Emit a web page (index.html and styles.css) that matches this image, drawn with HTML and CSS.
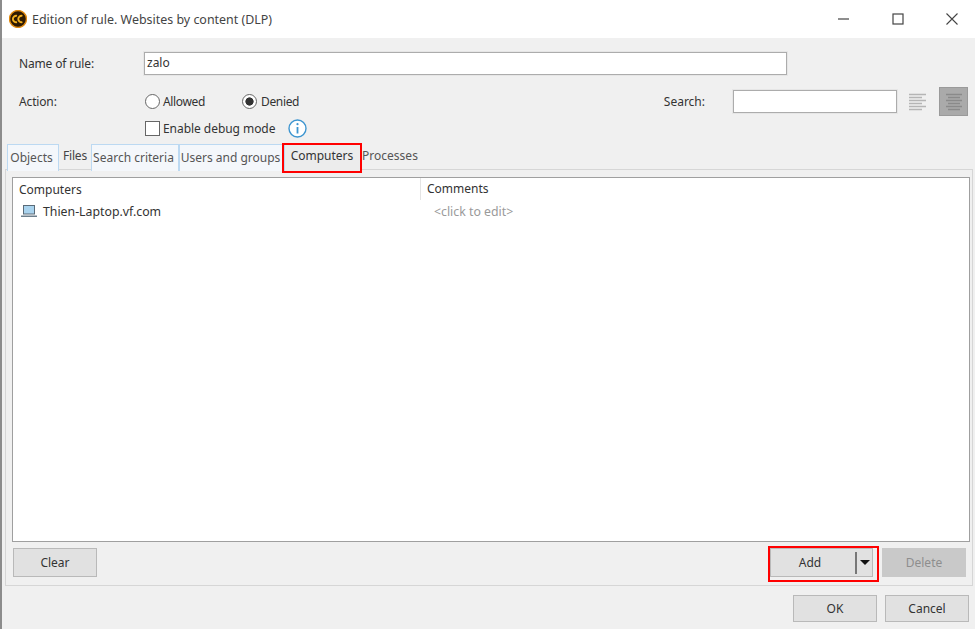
FILE: index.html
```html
<!DOCTYPE html>
<html lang="en">
<head>
<meta charset="utf-8">
<title>Edition of rule</title>
<link rel="stylesheet" href="styles.css">
</head>
<body>
<div class="window">
  <header class="titlebar">
    <svg class="app-icon" width="18" height="18" viewBox="0 0 18 18"><circle cx="9" cy="9" r="8.5" fill="#2e1a02"/><circle cx="9" cy="9" r="8.5" fill="none" stroke="#e08a10" stroke-width="1.4"/><path d="M8 5.800a3.300 3.300 0 1 0 0 6.400M13.400 5.800a3.300 3.300 0 1 0 0 6.400" fill="none" stroke="#f2b01e" stroke-width="1.900"/></svg>
    <span class="title">Edition of rule. Websites by content (DLP)</span>
    <div class="win-controls">
      <svg width="12" height="12" viewBox="0 0 12 12"><path d="M0 6h11" stroke="#444" stroke-width="1.2"/></svg>
      <svg width="12" height="12" viewBox="0 0 12 12"><rect x="1" y="1" width="10" height="10" fill="none" stroke="#444" stroke-width="1.2"/></svg>
      <svg width="12" height="12" viewBox="0 0 12 12"><path d="M.5.5l11 11M11.500.5l-11 11" stroke="#444" stroke-width="1.1"/></svg>
    </div>
  </header>
  <main class="body">
    <div class="row name-row">
      <label class="label">Name of rule:</label>
      <div class="input name-input">zalo</div>
    </div>
    <div class="row action-row">
      <span class="label">Action:</span>
      <span class="radio"></span><span class="radio-text allowed">Allowed</span>
      <span class="radio on"></span><span class="radio-text">Denied</span>
      <span class="search-label">Search:</span>
      <div class="input search-input"></div>
      <svg class="align-icon" width="18" height="18" viewBox="0 0 18 18"><path d="M0 1.500h17M0 4.500h13M0 7.500h17M0 10.500h13M0 13.500h17M0 16.500h13" stroke="#b5b5b5" stroke-width="1.6"/></svg>
      <div class="align-btn"><svg width="18" height="18" viewBox="0 0 18 18"><path d="M1 1.500h16M3 4.500h12M1 7.500h16M3 10.500h12M1 13.500h16M3 16.500h12" stroke="#8a8a8a" stroke-width="1.6"/></svg></div>
    </div>
    <div class="row debug-row">
      <span class="checkbox"></span><span class="debug-text">Enable debug mode</span>
      <svg class="info" width="19" height="19" viewBox="0 0 19 19"><circle cx="9.500" cy="9.500" r="8.500" fill="#fff" stroke="#3d95d0" stroke-width="1.400"/><path d="M9.500 8v6.500" stroke="#3d95d0" stroke-width="1.800"/><circle cx="9.500" cy="5.200" r="1.100" fill="#3d95d0"/></svg>
    </div>
    <nav class="tabs">
      <span class="tab framed t-objects">Objects</span>
      <span class="tab t-files">Files</span>
      <span class="tab framed t-search">Search criteria</span>
      <span class="tab framed t-users">Users and groups</span>
      <span class="tab active t-computers">Computers</span>
      <span class="tab t-processes">Processes</span>
    </nav>
    <section class="pane">
      <div class="table">
        <div class="thead"><span class="col-a">Computers</span><span class="col-b">Comments</span></div>
        <div class="trow">
          <span class="col-a cell">
            <svg width="16" height="14" viewBox="0 0 16 14"><rect x="2.500" y="1.500" width="11" height="8.500" fill="#a9d3ee" stroke="#5a6b78"/><path d="M0 11.500h16v1.500H0z" fill="#6d7f8c"/></svg>
            <span class="host">Thien-Laptop.vf.com</span>
          </span>
          <span class="col-b edit">&lt;click to edit&gt;</span>
        </div>
      </div>
      <div class="actions">
        <button class="btn clear">Clear</button>
        <div class="right-actions">
          <div class="btn add"><span class="add-text">Add</span><span class="split"></span><span class="caret"></span></div>
          <button class="btn delete">Delete</button>
        </div>
      </div>
    </section>
    <footer class="footer">
      <button class="btn foot">OK</button>
      <button class="btn foot">Cancel</button>
    </footer>
  </main>
</div>
</body>
</html>
```

FILE: styles.css
```css
* { box-sizing: border-box; }
html, body { margin: 0; padding: 0; }
body {
  width: 975px;
  height: 629px;
  overflow: hidden;
  font-family: "Noto Sans", "Open Sans", sans-serif;
  font-size: 12px;
  color: #333;
  background: #f0f0f0;
}
.window {
  position: relative;
  height: 629px;
  border-left: 2px solid #8c8c8c;
}
.titlebar {
  height: 38px;
  background: #fff;
  display: flex;
  align-items: center;
  padding: 0 17px 0 7px;
}
.app-icon { margin-right: 5px; }
.title { font-size: 12.450px; color: #444; }
.win-controls {
  margin-left: auto;
  display: flex;
  gap: 42px;
  align-items: center;
}
.body { height: 591px; background: #f0f0f0; display: flex; flex-direction: column; }
.row { display: flex; align-items: center; }
.label { width: 125px; color: #333; letter-spacing: -0.150px; }
.name-row { margin-top: 14px; height: 23px; padding-left: 17px; }
.input {
  height: 23px;
  background: #fff;
  border: 1px solid #acacac;
  box-shadow: 0 0 0 1px #e6e6e6;
  padding-left: 2px;
  line-height: 20px;
}
.name-input { width: 643px; }
.action-row { margin-top: 15px; height: 23px; padding-left: 17px; }
.radio {
  width: 15px;
  height: 15px;
  border-radius: 50%;
  border: 1px solid #666;
  background: #fff;
  flex: none;
  margin-left: 1px;
}
.radio.on { background: radial-gradient(circle, #333 0 3.800px, #fff 4.400px); }
.radio-text { margin-left: 3px; letter-spacing: -0.350px; }
.radio.on + .radio-text { margin-left: 4px; }
.allowed { width: 78px; }
.search-label { margin-left: auto; }
.search-input { width: 164px; margin-left: 28px; }
.align-icon { margin-left: 12px; }
.align-btn {
  width: 29px;
  height: 29px;
  background: #aaa;
  border: 1px solid #9a9a9a;
  margin-left: 12px;
  margin-right: 7px;
  display: flex;
  align-items: center;
  justify-content: center;
}
.debug-row { margin-top: 6px; height: 19px; padding-left: 143px; }
.checkbox { width: 15px; height: 15px; background: #fff; border: 1px solid #666; flex: none; }
.debug-text { margin-left: 3px; letter-spacing: -0.050px; }
.info { margin-left: 13px; }
.tabs { display: flex; height: 28px; margin-top: 5px; padding-left: 5px; align-items: flex-end; position: relative; z-index: 1; }
.tab { display: block; height: 27px; line-height: 26px; color: #555; text-align: center; flex: none; }
.tab.framed { background: #f4f7fb; border: 1px solid #bcd9f2; border-bottom: none; color: #555; padding-right: 3px; }
.t-objects { width: 52px; }
.t-files { width: 32px; line-height: 24px; color: #444; letter-spacing: -0.200px; }
.t-search { width: 88px; }
.t-users { width: 106px; }
.t-computers { width: 76px; color: #333; line-height: 24px; padding-right: 2px; }
.t-processes { width: 60px; line-height: 24px; padding-right: 2px; }
.tab.active { position: relative; background: #ececec; }
.tab.active::after {
  content: "";
  position: absolute;
  left: -3px;
  right: -1px;
  top: -1px;
  bottom: -2px;
  border: 2px solid #f00;
}
.pane {
  margin: -2px 0 0 3px;
  width: 968px;
  height: 417px;
  border: 1px solid #d6d6d6;
  display: flex;
  flex-direction: column;
  padding: 7px 4px 0 6px;
}
.table {
  width: 958px;
  height: 365px;
  flex: none;
  background: #fff;
  border: 1px solid #9f9f9f;
}
.thead { display: flex; height: 22px; align-items: center; color: #333; }
.col-a { width: 407px; padding-left: 6px; }
.col-b { padding-left: 6px; }
.thead .col-b { border-left: 1px solid #e4e4e4; height: 22px; line-height: 22px; }
.trow { display: flex; height: 22px; align-items: center; }
.cell { display: flex; align-items: center; gap: 6px; padding-left: 8px; color: #333; }
.host { font-size: 12.300px; }
.edit { color: #9a9a9a; padding-left: 14px; font-size: 12.300px; }
.actions { display: flex; justify-content: space-between; margin-top: 6px; padding: 0 2px 0 1px; }
.btn {
  font: inherit;
  color: #333;
  height: 29px;
  background: #e1e1e1;
  border: 1px solid #b9b9b9;
  padding: 0;
}
.clear { width: 84px; }
.right-actions { display: flex; gap: 9px; }
.add {
  width: 103px;
  display: flex;
  align-items: center;
  position: relative;
}
.add::after {
  content: "";
  position: absolute;
  inset: -3px -7px -6px -3px;
  border: 2px solid #f00;
}
.add-text { width: 84px; padding-right: 6px; text-align: center; }
.split { width: 2px; height: 22px; background: #777; }
.caret {
  width: 0;
  height: 0;
  margin-left: 3px;
  border-left: 5px solid transparent;
  border-right: 5px solid transparent;
  border-top: 5px solid #111;
}
.delete { width: 84px; background: #c9c9c9; border-color: #c9c9c9; color: #8e8e8e; }
.footer { display: flex; justify-content: flex-end; gap: 8px; margin-top: 9px; padding-right: 6px; }
.foot { width: 84px; height: 27px; }
```
